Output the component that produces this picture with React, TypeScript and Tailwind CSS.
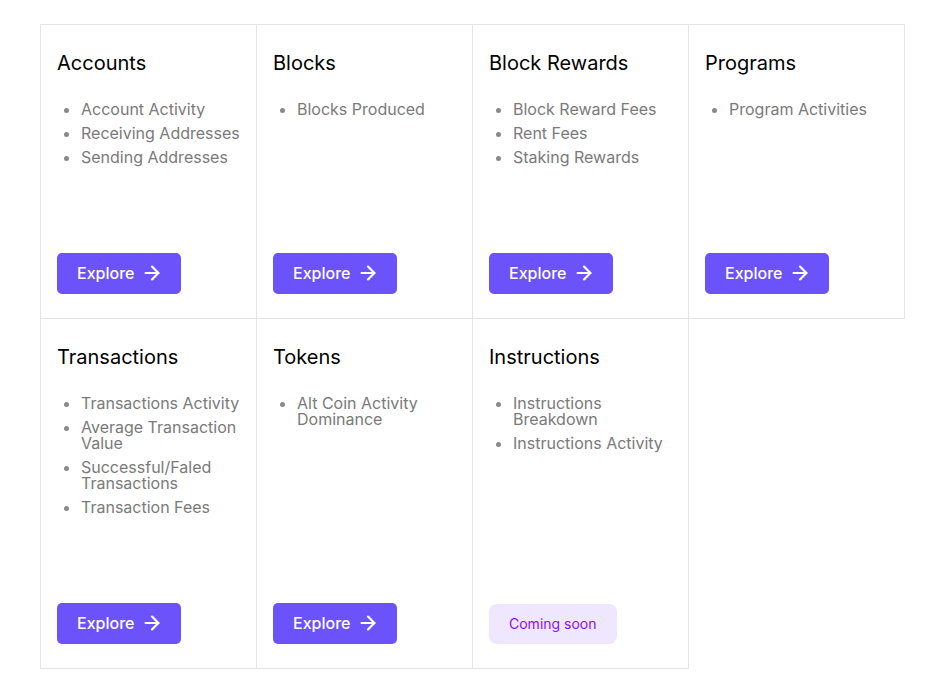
import React from "react";
import { ArrowRight } from "lucide-react";

interface Category {
  title: string;
  items: string[];
  comingSoon?: boolean;
}

const categories: Category[] = [
  { title: "Accounts", items: ["Account Activity", "Receiving Addresses", "Sending Addresses"] },
  { title: "Blocks", items: ["Blocks Produced"] },
  { title: "Block Rewards", items: ["Block Reward Fees", "Rent Fees", "Staking Rewards"] },
  { title: "Programs", items: ["Program Activities"] },
  {
    title: "Transactions",
    items: [
      "Transactions Activity",
      "Average Transaction Value",
      "Successful/Faled Transactions",
      "Transaction Fees",
    ],
  },
  { title: "Tokens", items: ["Alt Coin Activity Dominance"] },
  { title: "Instructions", items: ["Instructions Breakdown", "Instructions Activity"], comingSoon: true },
];

const App = () => {
  return (
    <div
      className="min-h-screen bg-white pl-10 pt-6"
      style={{ fontFamily: "Inter, 'Noto Sans', sans-serif" }}
    >
      <div className="grid w-[865px] grid-cols-[217px_216px_216px_216px]">
        {categories.map((cat, i) => (
          <div
            key={cat.title}
            className={
              "flex flex-col border-b border-r border-[#e5e5e7] px-4 pt-6 pb-6 " +
              (i < 4 ? "border-t " : "") +
              (i % 4 === 0 ? "border-l" : "")
            }
          >
            <h2 className="text-xl leading-7 font-normal text-black">{cat.title}</h2>
            <ul className="mt-6 list-disc space-y-2 pl-6 text-base leading-4 text-[#7a7a7a] marker:text-[#8a8a8a]">
              {cat.items.map((item) => (
                <li key={item}>{item}</li>
              ))}
            </ul>
            <div className="mt-auto pt-[88px]">
              {cat.comingSoon ? (
                <span className="mt-px inline-block rounded-lg bg-[#efe6ff] px-5 py-2.5 text-sm leading-5 text-[#8a12f0]">
                  Coming soon
                </span>
              ) : (
                <button
                  type="button"
                  className="flex h-[41px] w-[124px] items-center gap-[7px] rounded-[5px] bg-[#6c52fb] pb-px pl-5 text-base font-medium text-white"
                >
                  Explore
                  <ArrowRight className="h-[22px] w-[22px]" strokeWidth={2.4} />
                </button>
              )}
            </div>
          </div>
        ))}
      </div>
    </div>
  );
};

export default App;
